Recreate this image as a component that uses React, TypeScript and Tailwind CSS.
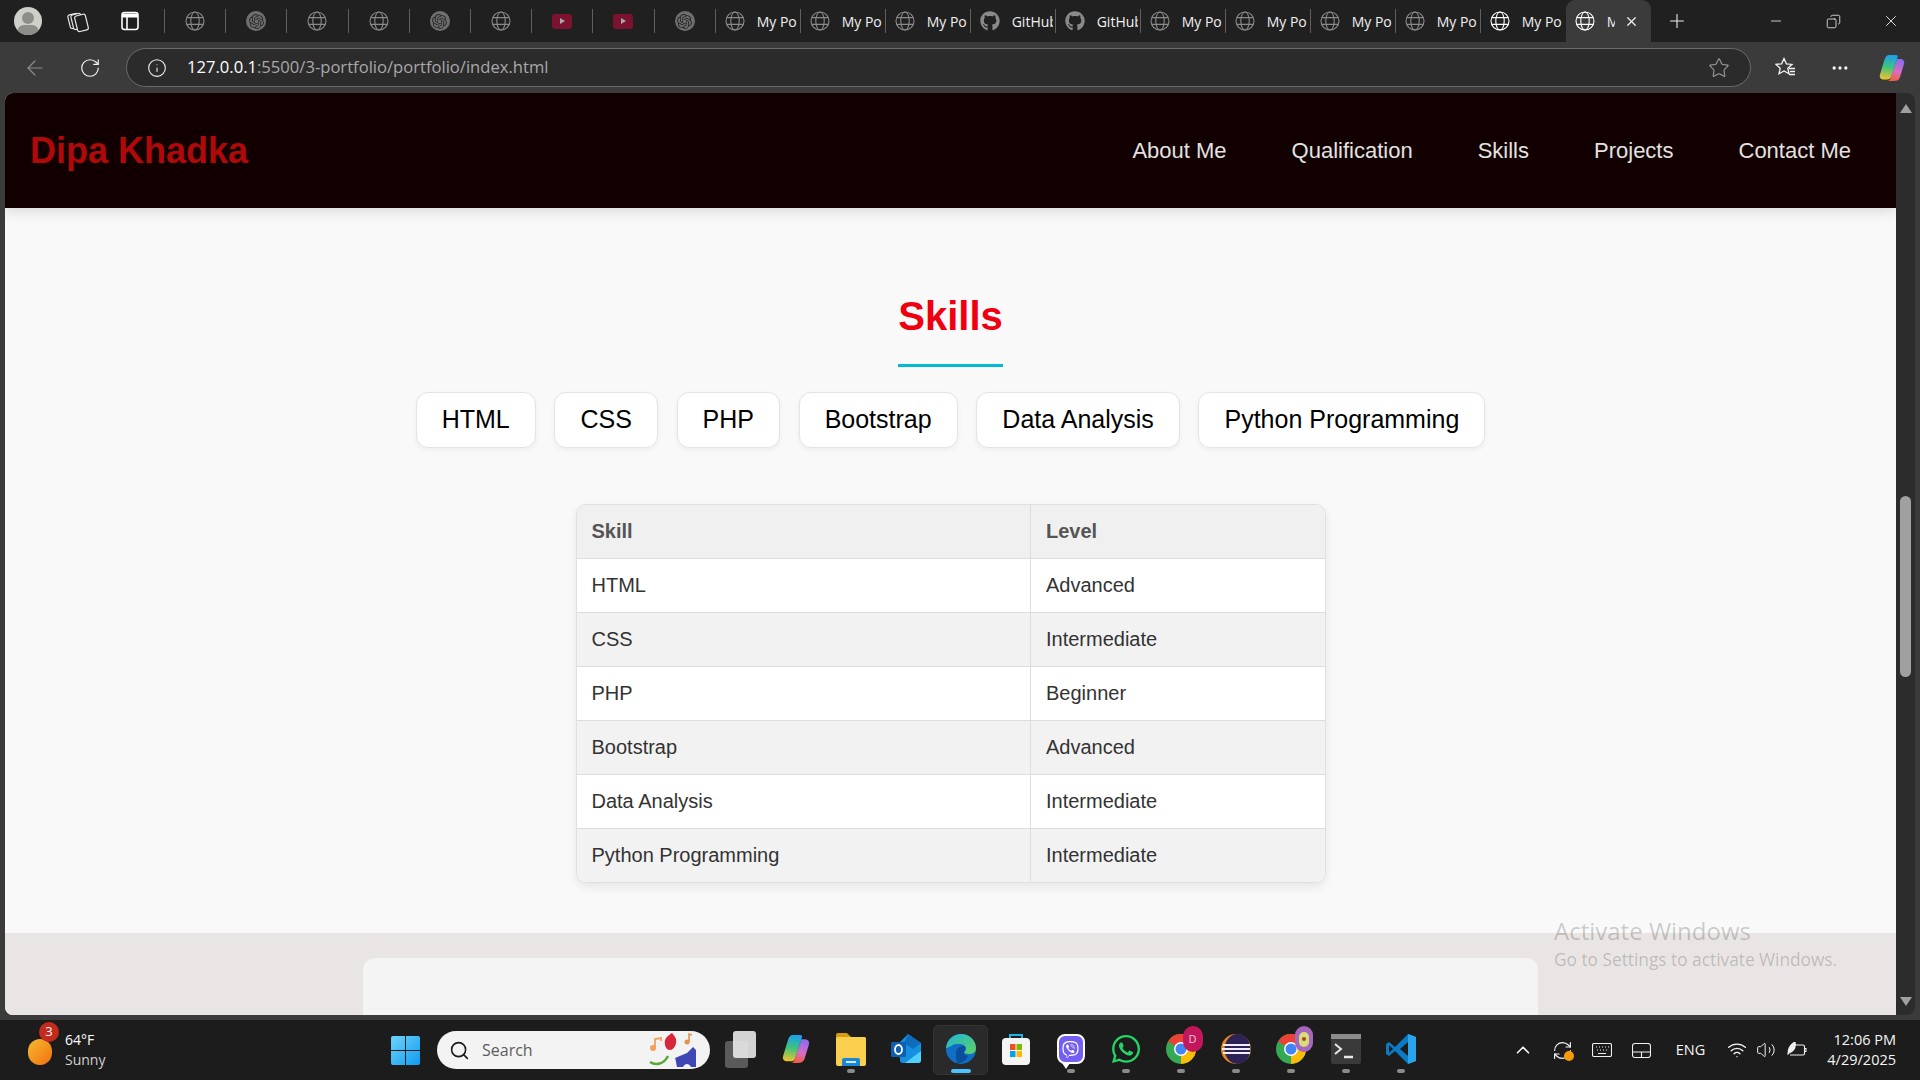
import { FC, ReactNode } from "react";
import { FaGithub, FaWhatsapp, FaViber } from "react-icons/fa";
import { SiOpenai } from "react-icons/si";
import { Copy, Info, RefreshCw, RotateCw, Star, X, Plus, Minus, MoreHorizontal, ChevronUp, Wifi, Volume2, Search, ArrowLeft } from "lucide-react";

const skills = ["HTML", "CSS", "PHP", "Bootstrap", "Data Analysis", "Python Programming"];

const rows = [
  ["HTML", "Advanced"],
  ["CSS", "Intermediate"],
  ["PHP", "Beginner"],
  ["Bootstrap", "Advanced"],
  ["Data Analysis", "Intermediate"],
  ["Python Programming", "Intermediate"],
];

const navLinks = ["About Me", "Qualification", "Skills", "Projects", "Contact Me"];

const Globe: FC<{ bright?: boolean }> = ({ bright }) => (
  <svg width="20" height="20" viewBox="0 0 20 20" fill="none" stroke={bright ? "#ffffff" : "#8a8a8a"} strokeWidth="1.1">
    <circle cx="10" cy="10" r="9" />
    <ellipse cx="10" cy="10" rx="4.2" ry="9" />
    <path d="M1.8 6.6h16.4M1.8 13.4h16.4" />
  </svg>
);

const GptIcon = () => (
  <span className="w-5 h-5 rounded-full bg-[#6f6f6f] flex items-center justify-center">
    <SiOpenai size={15} color="#2a2a2a" />
  </span>
);

const YtIcon = () => (
  <span className="w-5 h-[15px] rounded-[3px] bg-[#7a1230] flex items-center justify-center">
    <span className="w-0 h-0 border-y-[3.5px] border-y-transparent border-l-[5px] border-l-[#a8a8a8]" />
  </span>
);

const ShortTab: FC<{ children: ReactNode }> = ({ children }) => (
  <div className="w-[61.2px] h-[24px] border-r border-[#5f5f5f] flex items-center justify-center">{children}</div>
);

const WideTab: FC<{ icon: ReactNode; label: string; noBorder?: boolean }> = ({ icon, label, noBorder }) => (
  <div className={`w-[85px] h-[24px] flex items-center pl-[9px] ${noBorder ? "" : "border-r border-[#5f5f5f]"}`}>
    <span className="w-5 shrink-0 flex justify-center">{icon}</span>
    <span className="ml-[12px] w-[41px] overflow-hidden whitespace-nowrap text-[14px] text-[#f0f0f0]">{label}</span>
  </div>
);

const TabStrip = () => (
  <div className="h-[42px] bg-[#202020] flex items-center relative font-['Open_Sans',sans-serif]">
    <div className="w-[164px] h-full flex items-center pl-[14px]">
      <span className="w-[28px] h-[28px] rounded-full bg-[#cfcfca] overflow-hidden relative flex justify-center">
        <span className="absolute top-[5px] w-[12px] h-[12px] rounded-full bg-[#8d8d89]" />
        <span className="absolute top-[18px] w-[22px] h-[14px] rounded-full bg-[#8d8d89]" />
      </span>
      <svg className="ml-[25px]" width="22" height="24" viewBox="0 0 22 24" fill="#202020" stroke="#e8e8e8" strokeWidth="1.2">
        <rect x="2" y="5" width="10" height="14" rx="2" transform="rotate(-14 7 12)" />
        <rect x="5" y="5" width="10" height="15" rx="2" transform="rotate(-14 10 12)" />
        <rect x="9" y="6" width="11" height="16" rx="2" transform="rotate(-14 14 14)" />
      </svg>
      <svg className="ml-[32px]" width="18" height="20" viewBox="0 0 18 20" fill="none" stroke="#ffffff" strokeWidth="1.6">
        <rect x="1" y="1.5" width="16" height="17" rx="2.5" />
        <path d="M1 4.500h16" strokeWidth="4" />
        <path d="M6 6v12" />
      </svg>
    </div>
    <div className="w-px h-[24px] bg-[#5f5f5f]" />
    <ShortTab><Globe /></ShortTab>
    <ShortTab><GptIcon /></ShortTab>
    <ShortTab><Globe /></ShortTab>
    <ShortTab><Globe /></ShortTab>
    <ShortTab><GptIcon /></ShortTab>
    <ShortTab><Globe /></ShortTab>
    <ShortTab><YtIcon /></ShortTab>
    <ShortTab><YtIcon /></ShortTab>
    <ShortTab><GptIcon /></ShortTab>
    <WideTab icon={<Globe />} label="My Po" />
    <WideTab icon={<Globe />} label="My Po" />
    <WideTab icon={<Globe />} label="My Po" />
    <WideTab icon={<FaGithub size={20} color="#8a8a8a" />} label="GitHub" />
    <WideTab icon={<FaGithub size={20} color="#8a8a8a" />} label="GitHub" />
    <WideTab icon={<Globe />} label="My Po" />
    <WideTab icon={<Globe />} label="My Po" />
    <WideTab icon={<Globe />} label="My Po" />
    <WideTab icon={<Globe />} label="My Po" />
    <WideTab icon={<Globe bright />} label="My Po" noBorder />
    <div className="w-[85px] h-[42px] self-end bg-[#3b3b3b] rounded-t-[9px] flex items-center pl-[9px]">
      <Globe bright />
      <span className="ml-[12px] w-[8px] overflow-hidden text-[14px] text-[#f0f0f0]">M</span>
      <X size={15} color="#f0f0f0" className="ml-[9px]" />
    </div>
    <Plus size={22} color="#eeeeee" strokeWidth={1.2} className="ml-[15px]" />
    <div className="ml-auto flex items-center">
      <Minus size={16} color="#f0f0f0" strokeWidth={1.2} className="mr-[42px]" />
      <Copy size={15} color="#f0f0f0" strokeWidth={1.3} className="mr-[41px] -scale-x-100" />
      <X size={18} color="#f0f0f0" strokeWidth={1.2} className="mr-[20px]" />
    </div>
  </div>
);

const CopilotIcon: FC<{ size: number }> = ({ size }) => (
  <svg width={size} height={size} viewBox="0 0 28 28">
    <defs>
      <linearGradient id="cpa" x1="0.5" y1="0" x2="0.4" y2="1">
        <stop offset="0" stopColor="#1a9ff0" />
        <stop offset="0.5" stopColor="#3fc47a" />
        <stop offset="1" stopColor="#f2c230" />
      </linearGradient>
      <linearGradient id="cpb" x1="0.6" y1="0" x2="0.4" y2="1">
        <stop offset="0" stopColor="#8a6cf0" />
        <stop offset="0.55" stopColor="#d86cc8" />
        <stop offset="1" stopColor="#f0603a" />
      </linearGradient>
    </defs>
    <path d="M19 5h3c3 0 5 2 4 5l-4 13c-1 3-3 4-6 4h-7c2 0 3-1 3.500-2.500L19 5z" fill="url(#cpb)" />
    <path d="M11 1h7c1.500 0 2 1 1.500 2.500L13 23c-.5 1.500-2 2.500-3.500 2.500H6c-3 0-5-2-4-5l4.500-15C7.500 2.500 9 1 11 1z" fill="url(#cpa)" />
  </svg>
);

const Toolbar = () => (
  <div className="h-[51px] bg-[#3b3b3b] flex items-center font-['Open_Sans',sans-serif]">
    <ArrowLeft size={24} color="#8c8c8c" strokeWidth={1.2} className="ml-[23px]" />
    <RotateCw size={22} color="#f2f2f2" strokeWidth={1.3} className="ml-[32px]" />
    <div className="ml-[25px] w-[1625px] h-[39px] rounded-full bg-[#2b2b2b] border border-[#6b6b6b] flex items-center">
      <Info size={20} color="#f2f2f2" strokeWidth={1.3} className="ml-[20px]" />
      <span className="ml-[20px] text-[16.6px] text-[#a8a8a8] whitespace-nowrap">
        <span className="text-white">127.0.0.1</span>:5500/3-portfolio/portfolio/index.html
      </span>
      <Star size={22} color="#9a9a9a" strokeWidth={1.2} className="ml-auto mr-[20px]" />
    </div>
    <svg className="ml-[24px]" width="21" height="21" viewBox="0 0 21 21" fill="none" stroke="#f2f2f2" strokeWidth="1.300">
      <path d="M9 1.500l2.400 5.300 5.600.6-4.200 3.800 1.200 5.600L9 14l-5 2.800 1.200-5.600L1 7.400l5.600-.6z" />
      <path d="M14 11.500h6M15 14.500h5M14 17.500h6" />
    </svg>
    <MoreHorizontal size={20} color="#f2f2f2" className="ml-[34px]" />
    <span className="ml-[28px]"><CopilotIcon size={28} /></span>
  </div>
);

const NavBar = () => (
  <nav className="h-[115px] bg-[#120000] flex items-center justify-between pl-[25px] pr-[45px] relative z-10 shadow-[0_4px_12px_rgba(0,0,0,0.12)]">
    <h1 className="text-[36px] leading-[42px] font-bold text-[#b00909]">Dipa Khadka</h1>
    <div className="flex gap-[65px] text-[22px] text-[#e2e2e2]">
      {navLinks.map((link) => (
        <a key={link}>{link}</a>
      ))}
    </div>
  </nav>
);

const SkillsSection = () => (
  <section className="flex flex-col items-center pt-[85px] pb-[50px]">
    <h2 className="text-[40px] leading-[46px] font-bold text-[#ee0011]">Skills</h2>
    <div className="w-[105px] h-[3px] bg-[#00bcd4] mt-[25px]" />
    <div className="flex gap-[18.7px] mt-[25px]">
      {skills.map((skill) => (
        <div
          key={skill}
          className="h-[56px] px-[25px] flex items-center bg-white border border-[#e4e4e4] rounded-[12px] text-[25px] text-black shadow-[0_2px_5px_rgba(0,0,0,0.05)]"
        >
          {skill}
        </div>
      ))}
    </div>
    <div className="w-[750px] mt-[56px] rounded-[10px] overflow-hidden border border-[#e0e0e0] shadow-[0_4px_10px_rgba(0,0,0,0.08)]">
      <table className="w-full table-fixed border-collapse text-[20px]">
        <thead>
          <tr className="h-[53px] bg-[#f0f0f0] text-[#555555] font-bold text-left border-b border-[#dddddd]">
            <th className="w-[454px] pl-[15px] border-r border-[#dddddd]">Skill</th>
            <th className="pl-[15px]">Level</th>
          </tr>
        </thead>
        <tbody>
          {rows.map(([name, level], i) => (
            <tr key={name} className={`h-[54px] text-[#333333] border-b border-[#dddddd] last:border-b-0 ${i % 2 === 0 ? "bg-white" : "bg-[#f2f2f2]"}`}>
              <td className="pl-[15px] border-r border-[#dddddd]">{name}</td>
              <td className="pl-[15px]">{level}</td>
            </tr>
          ))}
        </tbody>
      </table>
    </div>
  </section>
);

const Scrollbar = () => (
  <div className="w-[19px] bg-[#2c2c2c] rounded-tr-[8px] rounded-br-[8px] flex flex-col items-center pt-[11px] pb-[9px]">
    <span className="w-0 h-0 border-x-[6px] border-x-transparent border-b-[9px] border-b-[#a0a0a0]" />
    <span className="w-[11px] h-[181px] rounded-full bg-[#a0a0a0] mt-[383px]" />
    <span className="w-0 h-0 border-x-[6px] border-x-transparent border-t-[9px] border-t-[#a0a0a0] mt-auto" />
  </div>
);

const EdgeIcon = () => (
  <svg width="32" height="32" viewBox="0 0 32 32">
    <defs>
      <linearGradient id="edgea" x1="0" y1="0" x2="1" y2="1">
        <stop offset="0" stopColor="#1fb4d8" />
        <stop offset="1" stopColor="#5fd35f" />
      </linearGradient>
    </defs>
    <circle cx="16" cy="16" r="15" fill="#0f6fc4" />
    <path d="M1 15C2 6 9 1 16 1c8 0 15 6 15 14 0 4-3 6-7 6-3 0-5-1-5-2 2-1 3-3 1-6-3-3-10-3-14 0-2 1-4 2-5 2z" fill="url(#edgea)" />
    <path d="M11 20c0-4 3-7 7-7 2 0 3 2 2 4-2 3-1 5 3 6-2 5-7 8-11 7-1-3-1-7-1-10z" fill="#0b4f9c" />
  </svg>
);

const StoreIcon = () => (
  <svg width="30" height="34" viewBox="0 0 30 34">
    <path d="M9 7V3h12v4" fill="none" stroke="#1fb4e8" strokeWidth="2" />
    <rect x="1" y="6" width="28" height="27" rx="4" fill="#f4f4f4" />
    <rect x="9" y="12" width="5.500" height="6" fill="#f25022" />
    <rect x="15.500" y="12" width="5.500" height="6" fill="#7fba00" />
    <rect x="9" y="19" width="5.500" height="6" fill="#00a4ef" />
    <rect x="15.500" y="19" width="5.500" height="6" fill="#ffb900" />
  </svg>
);

const ChromeIcon: FC<{ badge: ReactNode }> = ({ badge }) => (
  <span className="relative w-[30px] h-[30px] block">
    <svg width="30" height="30" viewBox="0 0 30 30">
      <circle cx="15" cy="15" r="15" fill="#34a853" />
      <path d="M15 15L2 7.500A15 15 0 0 1 28 7.500z" fill="#ea4335" />
      <path d="M15 15h15a15 15 0 0 1-15 15z" fill="#fbbc05" />
      <circle cx="15" cy="15" r="7" fill="#ffffff" />
      <circle cx="15" cy="15" r="5.500" fill="#4285f4" />
    </svg>
    {badge}
  </span>
);

const TaskIcon: FC<{ children: ReactNode; dot?: boolean; active?: boolean }> = ({ children, dot, active }) => (
  <div className={`w-[55px] h-[50px] relative flex items-center justify-center pb-[2px] ${active ? "bg-[#2a2a2a] rounded-[5px] border border-[#333333]" : ""}`}>
    {children}
    {dot && <span className="absolute bottom-[2px] left-1/2 -translate-x-1/2 w-[8px] h-[4px] rounded-full bg-[#8a8a8a]" />}
    {active && <span className="absolute bottom-[1px] left-1/2 -translate-x-1/2 w-[20px] h-[4px] rounded-full bg-[#4cc2ff]" />}
  </div>
);

const Taskbar = () => (
  <div className="mt-[5px] h-[60px] bg-[#1c1c1c] flex items-center font-['Open_Sans',sans-serif] text-white relative">
    <div className="w-[391px] flex items-center pl-[28px] relative">
      <span className="w-[24px] h-[26px] rounded-full bg-gradient-to-br from-[#f5b82e] to-[#f0700e] mt-[4px]" />
      <span className="absolute left-[39px] -top-[8px] w-[20px] h-[20px] rounded-full bg-[#c42b1c] text-[13px] flex items-center justify-center">3</span>
      <div className="ml-[13px] text-[14px] leading-[20px]">
        <p>64°F</p>
        <p className="text-[#d0d0d0]">Sunny</p>
      </div>
    </div>
    <svg width="29" height="29" viewBox="0 0 29 29">
      <defs>
        <linearGradient id="winl" x1="0" y1="0" x2="1" y2="1">
          <stop offset="0" stopColor="#6ed4fa" />
          <stop offset="1" stopColor="#0f9af0" />
        </linearGradient>
      </defs>
      <path d="M0 2a2 2 0 0 1 2-2h12v14H0zM15 0h12a2 2 0 0 1 2 2v12H15zM0 15h14v14H2a2 2 0 0 1-2-2zM15 15h14v12a2 2 0 0 1-2 2H15z" fill="url(#winl)" />
    </svg>
    <div className="ml-[17px] w-[273px] h-[38px] rounded-full bg-[#f3f3f3] flex items-center pl-[12px] text-[#5d5d5d]">
      <Search size={21} color="#1a1a1a" strokeWidth={1.8} />
      <span className="ml-[12px] text-[16px]">Search</span>
      <svg className="ml-auto mr-[11px]" width="52" height="36" viewBox="0 0 52 36">
        <path d="M3 30c6 4 14 2 18-6" fill="none" stroke="#5aa83c" strokeWidth="2.500" />
        <path d="M18 8c2-4 5-6 7-7 2 2 3 4 4 6 1 5-2 11-6 11s-6-5-5-10z" fill="#d8263c" />
        <path d="M28 26l12-5 6-6 3 3v17h-5c-2-4-6-4-8 0h-6c-1-4-1-7-2-9z" fill="#3f47b5" />
        <circle cx="6" cy="16" r="3" fill="#f2a25c" />
        <path d="M8 16V7l6-1v3" fill="none" stroke="#f2a25c" strokeWidth="1.800" />
        <circle cx="40" cy="10" r="2.500" fill="#e8904a" />
        <path d="M42 10V2l3 1" fill="none" stroke="#e8904a" strokeWidth="1.600" />
      </svg>
    </div>
    <div className="ml-[3px] flex items-center">
      <TaskIcon>
        <span className="relative block w-[31px] h-[37px]">
          <span className="absolute left-0 bottom-0 w-[23px] h-[27px] rounded-[3px] bg-[#5a5a5a]" />
          <span className="absolute right-0 top-0 w-[23px] h-[27px] rounded-[3px] bg-[#e8e8e8]/90" />
        </span>
      </TaskIcon>
      <TaskIcon><CopilotIcon size={30} /></TaskIcon>
      <TaskIcon dot>
        <svg width="30" height="34" viewBox="0 0 30 34">
          <path d="M0 3a2 2 0 0 1 2-2h9l4 4h13a2 2 0 0 1 2 2v4H0z" fill="#d99a14" />
          <rect x="0" y="5" width="30" height="29" rx="2" fill="#fbcf4e" />
          <path d="M6 34v-6a2 2 0 0 1 2-2h14a2 2 0 0 1 2 2v6z" fill="#1c86d6" />
          <rect x="10" y="29" width="10" height="2" fill="#cfe8fa" />
        </svg>
      </TaskIcon>
      <TaskIcon>
        <svg width="30" height="32" viewBox="0 0 30 32">
          <path d="M8 10l9-9 13 9v17a3 3 0 0 1-3 3H12a3 3 0 0 1-3-3z" fill="#1490df" />
          <path d="M17 1l13 9-8 6-9-6z" fill="#0f6cbd" />
          <path d="M14 30l16-12v9a3 3 0 0 1-3 3z" fill="#4fd0ff" />
          <rect x="0" y="9" width="15" height="15" rx="1.500" fill="#0f5fb0" />
          <ellipse cx="7.500" cy="16.500" rx="3.500" ry="4.500" fill="none" stroke="#ffffff" strokeWidth="1.800" />
        </svg>
      </TaskIcon>
      <TaskIcon active><EdgeIcon /></TaskIcon>
      <TaskIcon><StoreIcon /></TaskIcon>
      <TaskIcon dot>
        <span className="relative w-[28px] h-[30px] rounded-[8px] bg-[#7360f2] border-2 border-white flex items-center justify-center">
          <FaViber size={17} color="#ffffff" />
          <span className="absolute left-[3px] -bottom-[7px] w-0 h-0 border-x-[4px] border-x-transparent border-t-[6px] border-t-white" />
        </span>
      </TaskIcon>
      <TaskIcon dot><FaWhatsapp size={32} color="#25d366" /></TaskIcon>
      <TaskIcon dot>
        <ChromeIcon badge={<span className="absolute -right-[7px] -top-[8px] w-[20px] h-[26px] rounded-full bg-[#c2185b] text-[11px] text-[#f5c6d8] flex items-center justify-center">D</span>} />
      </TaskIcon>
      <TaskIcon dot>
        <svg width="30" height="32" viewBox="0 0 30 32">
          <circle cx="15" cy="16" r="15" fill="#e8891c" />
          <ellipse cx="16.500" cy="16" rx="13" ry="15" fill="#2c2255" />
          <path d="M2 12h27M1 16h28M2 20h27" stroke="#f0eef8" strokeWidth="1.800" />
        </svg>
      </TaskIcon>
      <TaskIcon dot>
        <ChromeIcon badge={<span className="absolute -right-[7px] -top-[8px] w-[18px] h-[26px] rounded-full bg-[#a566bb] flex items-center justify-center"><span className="w-[10px] h-[15px] rounded-full bg-[#d7dd7a] flex items-center justify-center"><span className="w-[4px] h-[4px] rounded-full bg-[#a8431c]" /></span></span>} />
      </TaskIcon>
      <TaskIcon dot>
        <svg width="30" height="30" viewBox="0 0 30 30">
          <rect width="30" height="30" rx="2" fill="#3a3a3a" />
          <rect width="30" height="5" fill="#8c8c8c" />
          <path d="M4 10l6 5-6 5" fill="none" stroke="#e8e8e8" strokeWidth="2" />
          <path d="M13 23h9" stroke="#e8e8e8" strokeWidth="2.500" />
        </svg>
      </TaskIcon>
      <TaskIcon dot>
        <svg width="30" height="32" viewBox="0 0 30 32">
          <path d="M22 1L9 14 3 9l-3 2v10l3 2 6-5 13 13 8-3V4z" fill="#0a7cc7" />
          <path d="M22 1l8 3v24l-8 3z" fill="#2aa4ed" />
          <path d="M22 9v14l-8-7z" fill="#1c1c1c" />
          <path d="M3 12l4 4-4 4z" fill="#1c1c1c" />
        </svg>
      </TaskIcon>
    </div>
    <div className="ml-auto flex items-center text-[#f5f5f5]">
      <ChevronUp size={22} strokeWidth={1.8} />
      <span className="ml-[18px] relative">
        <RefreshCw size={21} strokeWidth={1.3} />
        <span className="absolute -right-[1px] bottom-0 w-[10px] h-[10px] rounded-full bg-[#f59a0a]" />
      </span>
      <svg className="ml-[19px]" width="20" height="14" viewBox="0 0 20 14" fill="none" stroke="#f0f0f0" strokeWidth="1.100">
        <rect x="0.500" y="0.500" width="19" height="13" rx="1.500" />
        <path d="M4 4h1M7 4h1M10 4h1M13 4h1M16 4h1M5 7h1M8 7h1M11 7h1M14 7h1M6 10.500h8" />
      </svg>
      <svg className="ml-[20px]" width="19" height="15" viewBox="0 0 19 15" fill="none" stroke="#f0f0f0" strokeWidth="1.100">
        <rect x="0.500" y="0.500" width="18" height="14" rx="2.500" />
        <path d="M0.500 9h18M9.500 9v5.500" />
      </svg>
      <span className="ml-[25px] text-[14.5px]">ENG</span>
      <Wifi size={20} strokeWidth={1.6} className="ml-[22px]" />
      <Volume2 size={20} strokeWidth={1.2} className="ml-[9px]" />
      <svg className="ml-[11px]" width="20" height="16" viewBox="0 0 20 16" fill="none" stroke="#f0f0f0" strokeWidth="1.100">
        <path d="M6 3h10a1.500 1.500 0 0 1 1.500 1.500v7A1.500 1.500 0 0 1 16 13H3" />
        <path d="M17.500 6.500H19v3h-1.500" />
        <path d="M1 12C1 6 4 2 8 0c1 5-1 9-6 11z" fill="#f0f0f0" />
      </svg>
      <div className="ml-[20px] mr-[24px] text-right text-[14.5px] leading-[20px]">
        <p>12:06 PM</p>
        <p>4/29/2025</p>
      </div>
    </div>
  </div>
);

export default function App() {
  return (
    <div className="w-[1920px] h-[1080px] overflow-hidden bg-[#3b3b3b] relative font-['Liberation_Sans',Arial,sans-serif]">
      <TabStrip />
      <Toolbar />
      <div className="h-[922px] flex pl-[5px] pr-[5px]">
        <main className="w-[1891px] h-full overflow-hidden bg-[#f9f9f9] rounded-tl-[8px] rounded-bl-[8px]">
          <NavBar />
          <SkillsSection />
          <div className="h-[82px] bg-[#e9e5e4] pt-[25px] flex justify-center">
            <div className="w-[1175px] h-[57px] bg-[#f4f4f4] rounded-t-[12px]" />
          </div>
        </main>
        <Scrollbar />
      </div>
      <Taskbar />
      <div className="absolute left-[1554px] top-[914px] text-black/20 font-['Open_Sans',sans-serif] pointer-events-none">
        <p className="text-[24px] leading-[34px]">Activate Windows</p>
        <p className="text-[17.3px] leading-[24px]">Go to Settings to activate Windows.</p>
      </div>
    </div>
  );
}
